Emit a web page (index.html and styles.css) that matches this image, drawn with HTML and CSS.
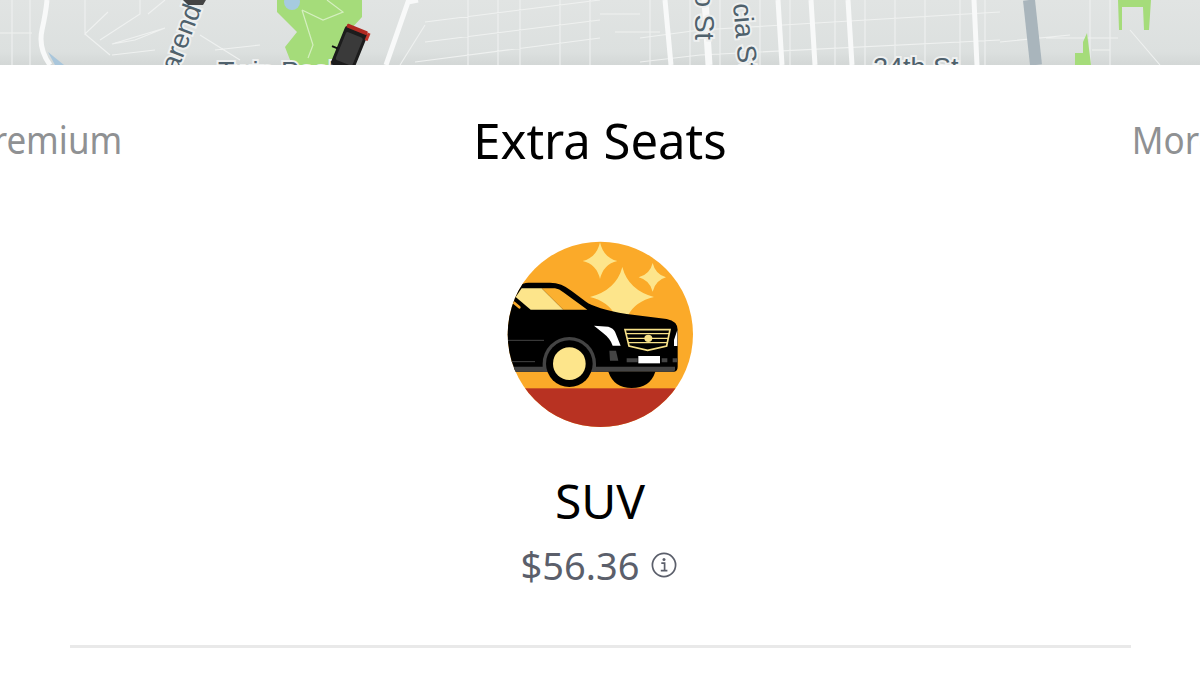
FILE: index.html
```html
<!DOCTYPE html>
<html lang="en">
<head>
<meta charset="utf-8">
<title>Extra Seats</title>
<link rel="stylesheet" href="styles.css">
</head>
<body>
<div class="map">
  <svg class="map-svg" viewBox="0 0 1200 65" width="1200" height="65" aria-hidden="true">
    <defs>
      <linearGradient id="mapbg" x1="0" y1="0" x2="0" y2="1">
        <stop offset="0" stop-color="#e1e4e3"/>
        <stop offset="0.8" stop-color="#dce0df"/>
        <stop offset="1" stop-color="#d3d7d6"/>
      </linearGradient>
    </defs>
    <rect width="1200" height="65" fill="url(#mapbg)"/>
    <path d="M0 33H32M12 0V65M30 0V65M85 0V34L108 12M85 34L110 55M112 44L165 28M112 55L155 50M100 40L140 14V0M148 14L165 0M165 28L135 40L112 44M200 35L240 60M215 50L260 45M400 65L425 25M425 22L600 0M425 42L600 20M415 62L600 38M468 0V65M498 0V65M520 0V65M560 0V65M590 0V65M640 14H600M615 32H660M650 0V65" fill="none" stroke="#eff1f0" stroke-width="1.1"/>
    <path d="M640 62L700 55L1000 40M640 38L700 30L1000 12M690 0V65M720 0V65M760 0V65M790 0V65M835 0V65M865 0V65M895 0V65M925 0V65M960 0V65M985 0V65M1000 42L1070 35M1090 0V65M1110 0V65M1046 38H1118M1130 30L1160 65M1092 50H1110" fill="none" stroke="#eff1f0" stroke-width="1.1"/>
    <path d="M47 0Q46 12 42 30T50 65M418 0L408 2L386 65M665 0L671 65M778 0L782 65M811 0L815 65M848 0L852 65M974 0L977 65" fill="none" stroke="#f8f9f9" stroke-width="5"/>
    <path d="M705 0L709 65" fill="none" stroke="#f8f9f9" stroke-width="7"/>
    <path d="M1029 0L1036 65" fill="none" stroke="#a9b5bc" stroke-width="12"/>
    <path d="M48 52L64 65H55Z" fill="#a9c6db"/>
    <path d="M277 0H362V17L350 30L330 65H292L285 47L297 32L277 12Z" fill="#a5dc7a"/>
    <ellipse cx="292" cy="2" rx="8" ry="8" fill="#a6cbe0"/>
    <path d="M302 10L313 45L308 58M302 10L323 20L343 12L327 0" fill="none" stroke="#d5efc0" stroke-width="1.2"/>
    <path d="M1118 0H1151L1149 30H1144L1143 7H1122V30H1119Z" fill="#a5dc7a"/>
    <path d="M1083 42L1087 33L1091 65H1075V53H1083Z" fill="#a5dc7a"/>
    <g class="map-label">
      <text transform="translate(177 73) rotate(-69)">arend</text>
      <text transform="translate(695 -8) rotate(90)">o St</text>
      <text transform="translate(733 4) rotate(85)">cia St</text>
      <text x="873" y="77">24th St</text>
      <text x="218" y="81">Twin Peaks</text>
    </g>
    <path d="M183 0H206L203 5H188Z" fill="#444"/>
    <g transform="translate(350 47) rotate(22)">
      <rect x="-12" y="-19" width="24" height="42" rx="3" fill="#1c1c1c"/>
      <rect x="-11" y="-21" width="22" height="4" rx="1" fill="#b02a22"/>
      <rect x="-9" y="-13" width="18" height="30" rx="2" fill="#3a3a3a"/>
      <rect x="11" y="-20" width="3" height="8" fill="#c4352b"/>
      <rect x="-17" y="5" width="6" height="2" fill="#111"/>
    </g>
  </svg>
</div>
<main class="panel">
  <nav class="tabs">
    <div class="tab tab-left">Premium</div>
    <h1 class="tab-title">Extra Seats</h1>
    <div class="tab tab-right">More</div>
  </nav>
  <section class="product">
    <svg class="product-icon" viewBox="0 0 600 600" width="200" height="200" aria-hidden="true">
      <defs><clipPath id="disc"><circle cx="301" cy="298" r="278"/></clipPath></defs>
      <g clip-path="url(#disc)">
        <rect width="600" height="600" fill="#fbaa29"/>
        <rect y="460" width="600" height="140" fill="#b83222"/>
        <path d="M300 22Q310 68 352 78Q310 88 300 132Q290 88 248 78Q290 68 300 22Z" fill="#fde58b"/>
        <path d="M367 96Q385 165 462 186Q405 200 385 240H345Q325 200 270 186Q349 165 367 96Z" fill="#fde58b"/>
        <path d="M458 84Q466 118 498 127Q466 136 458 170Q450 136 416 127Q450 118 458 84Z" fill="#fde58b"/>
        <path d="M20 225L50 155Q70 143 85 143H150Q185 143 215 168L258 200Q285 220 380 237L500 252Q533 258 533 285V395Q533 410 520 410H15Z" fill="#000"/>
        <path d="M47 186L65 160H125L190 224H92Z" fill="#fde58b"/>
        <path d="M125 160H165Q178 162 190 172L262 224H190Z" fill="#fbb030"/>
        <path d="M42 203L58 217" stroke="#fbaa29" stroke-width="8" stroke-linecap="round"/>
        <path d="M20 316H132" stroke="#444" stroke-width="3"/>
        <path d="M20 380H105" stroke="#444" stroke-width="3"/>
        <path d="M20 395H525V404Q525 410 518 410H20Z" fill="#444"/>
        <path d="M282 272L325 275Q340 280 345 290L362 332H338Q330 310 310 295Z" fill="#fff"/>
        <path d="M522 315L532 285V333H522Z" fill="#fff"/>
        <path d="M375 284H510L500 333L443 346L387 333Z" fill="#000" stroke="#f6e088" stroke-width="5"/>
        <path d="M378 296H507M381 310H504M384 323H501" stroke="#f6e088" stroke-width="4"/>
        <ellipse cx="445" cy="310" rx="12" ry="11" fill="#f6e088"/>
        <path d="M328 347H348L355 377H330Z" fill="#444"/>
        <path d="M380 370H413V382H380ZM485 370H502V382H485ZM518 370H532V382H518Z" fill="#444"/>
        <rect x="415" y="363" width="65" height="22" fill="#fff"/>
        <path d="M325 410H466Q450 459 395 459Q342 459 325 410Z" fill="#000"/>
        <path d="M128 386A80 80 0 0 1 288 386V410H128Z" fill="#444"/>
        <circle cx="208" cy="386" r="70" fill="#000"/>
        <circle cx="208" cy="386" r="49" fill="#fde58b"/>
      </g>
    </svg>
    <h2 class="product-name">SUV</h2>
    <div class="product-price">
      <span>$56.36</span>
      <svg class="info-icon" viewBox="0 0 26 26" width="26" height="26" aria-hidden="true">
        <circle cx="13" cy="13" r="11.6" fill="none" stroke="#5b5f6b" stroke-width="1.7"/>
        <circle cx="13" cy="7.6" r="1.5" fill="#5b5f6b"/>
        <path d="M10.3 11.2H13.6V18.2M9.8 18.6H16.4" fill="none" stroke="#5b5f6b" stroke-width="1.7"/>
      </svg>
    </div>
  </section>
  <hr class="divider">
</main>
</body>
</html>
```

FILE: styles.css
```css
* { box-sizing: border-box; }
html, body { margin: 0; padding: 0; }
body {
  width: 1200px;
  height: 675px;
  overflow: hidden;
  background: #fff;
  font-family: "Noto Sans", "Open Sans", sans-serif;
  color: #000;
}
.map { height: 65px; overflow: hidden; }
.map-svg { display: block; }
.map-label text {
  font-family: "Liberation Sans", sans-serif;
  font-size: 27px;
  fill: #4f616c;
  stroke: #eef0f0;
  stroke-width: 4px;
  paint-order: stroke;
}
.panel { display: flex; flex-direction: column; align-items: center; }
.tabs {
  width: 100%;
  display: grid;
  grid-template-columns: minmax(0, 1fr) auto minmax(0, 1fr);
  align-items: center;
  margin-top: 44px;
  height: 62px;
  overflow: hidden;
}
.tab { font-size: 35px; line-height: 62px; color: #8f9193; white-space: nowrap; transform: scaleY(1.07); }
.tab-left { justify-self: end; margin-right: 351px; }
.tab-right { justify-self: start; margin-left: 405px; }
.tab-title { margin: 0; font-size: 49px; font-weight: 400; line-height: 62px; white-space: nowrap; }
.product { display: flex; flex-direction: column; align-items: center; margin-top: 64px; }
.product-icon { display: block; }
.product-name { margin: 36px 0 0; font-size: 48px; font-weight: 400; line-height: 60px; }
.product-price {
  display: flex;
  align-items: center;
  gap: 12px;
  margin-top: 9px;
  padding-right: 2px;
  font-size: 38px;
  line-height: 50px;
  color: #5b5f6b;
}
.info-icon { display: block; }
.divider {
  width: 1061px;
  height: 3px;
  margin: 55px 0 0 1px;
  border: 0;
  background: #e9e9e9;
}
```
